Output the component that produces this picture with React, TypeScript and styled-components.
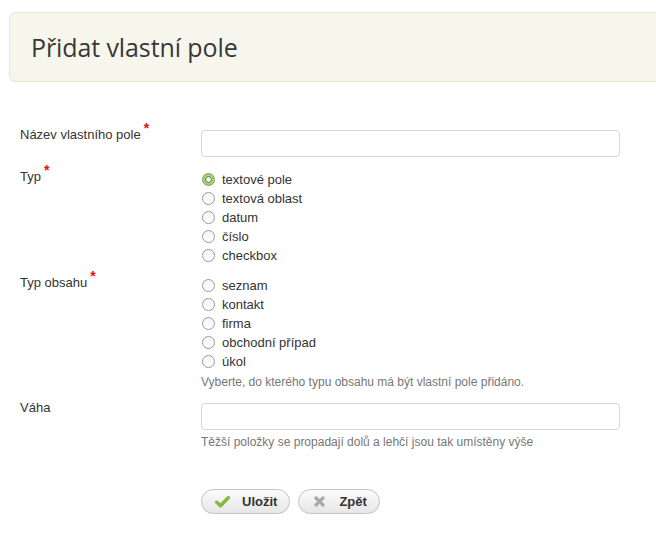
import React from "react";
import styled, { createGlobalStyle } from "styled-components";

const Global = createGlobalStyle`
  html, body { margin: 0; padding: 0; background: #fff; overflow: hidden; }
  body { font-family: "Liberation Sans", Arial, sans-serif; color: #333; }
`;

const Page = styled.div`
  padding-top: 12px;
  width: 656px;
  overflow: hidden;
`;

const Header = styled.div`
  margin-left: 9px;
  width: 680px;
  height: 70px;
  box-sizing: border-box;
  background: #f6f6ec;
  border: 1px solid #e4eac6;
  border-radius: 6px;
  display: flex;
  align-items: center;
  padding-left: 21px;
`;

const Title = styled.h1`
  margin: 0;
  font-family: "Open Sans", "DejaVu Sans", sans-serif;
  font-weight: 400;
  font-size: 25px;
  color: #383838;
  letter-spacing: -0.1px;
`;

const Form = styled.form`
  padding: 44px 0 0 20px;
`;

const Row = styled.div<{ $gap: number }>`
  display: grid;
  grid-template-columns: 181px 419px;
  align-items: start;
  margin-top: ${(p) => p.$gap}px;
`;

const Label = styled.label`
  font-size: 13px;
  line-height: 18px;
  color: #333;
`;

const Req = styled.sup`
  color: #e01010;
  font-weight: bold;
  font-size: 14px;
  line-height: 0;
  margin-left: 3px;
  position: relative;
  top: -1px;
`;

const Field = styled.div<{ $pad: number }>`
  padding-top: ${(p) => p.$pad}px;
`;

const Input = styled.input`
  display: block;
  width: 419px;
  height: 27px;
  box-sizing: border-box;
  border: 1px solid #d6d6d6;
  border-radius: 4px;
  background: #fff;
  font: 13px "Liberation Sans", Arial, sans-serif;
  padding: 0 6px;
  outline: none;
`;

const RadioList = styled.div`
  display: flex;
  flex-direction: column;
`;

const RadioRow = styled.div`
  display: flex;
  align-items: center;
  height: 19px;
  font-size: 13px;
  line-height: 19px;
  color: #333;
  gap: 7px;
`;

const Radio = styled.span<{ $checked?: boolean }>`
  width: 13px;
  height: 13px;
  box-sizing: border-box;
  border-radius: 50%;
  margin-left: 1px;
  flex: none;
  border: 1px solid ${(p) => (p.$checked ? "#7e9a66" : "#9a9a9a")};
  background: ${(p) =>
    p.$checked
      ? "radial-gradient(circle, #fff 0 2px, #5f8f35 2.5px 3px, #a6d373 3.5px)"
      : "linear-gradient(#f4f4f4, #ffffff)"};
`;

const Help = styled.div<{ $top: number }>`
  font-size: 12px;
  line-height: 16px;
  color: #777;
  margin-top: ${(p) => p.$top}px;
`;

const Actions = styled.div`
  display: flex;
  gap: 8px;
  margin-top: 39px;
  padding-left: 181px;
`;

const Button = styled.button`
  display: flex;
  align-items: center;
  gap: 12px;
  height: 25px;
  box-sizing: border-box;
  padding: 0 12px 0 12px;
  border: 1px solid #c4c4c4;
  border-radius: 13px;
  background: linear-gradient(#fbfbfb, #e6e6e6);
  font: bold 13px "Liberation Sans", Arial, sans-serif;
  color: #333;
  box-shadow: 0 1px 0 rgba(0, 0, 0, 0.05);
`;

const IconBox = styled.span`
  width: 16px;
  height: 16px;
  display: flex;
  align-items: center;
  justify-content: center;
`;

const CheckIcon = () => (
  <svg width="15" height="12" viewBox="0 0 15 12">
    <path d="M1.8 6.3 L5.5 9.8 L13.3 1.8" fill="none" stroke="#8ab83a" strokeWidth="3.6" strokeLinecap="round" strokeLinejoin="round" />
  </svg>
);

const XIcon = () => (
  <svg width="11" height="11" viewBox="0 0 11 11">
    <path d="M2 2 L9 9 M9 2 L2 9" fill="none" stroke="#aaaaaa" strokeWidth="3.2" strokeLinecap="round" />
  </svg>
);

const typy = ["textové pole", "textová oblast", "datum", "číslo", "checkbox"];
const obsahy = ["seznam", "kontakt", "firma", "obchodní případ", "úkol"];

export default function App() {
  return (
    <Page>
      <Global />
      <Header>
        <Title>Přidat vlastní pole</Title>
      </Header>
      <Form onSubmit={(e) => e.preventDefault()}>
        <Row $gap={0}>
          <Label>
            Název vlastního pole<Req>*</Req>
          </Label>
          <Field $pad={4}>
            <Input type="text" />
          </Field>
        </Row>
        <Row $gap={11}>
          <Label>
            Typ<Req>*</Req>
          </Label>
          <Field $pad={2}>
            <RadioList>
              {typy.map((t, i) => (
                <RadioRow key={t}>
                  <Radio $checked={i === 0} />
                  {t}
                </RadioRow>
              ))}
            </RadioList>
          </Field>
        </Row>
        <Row $gap={9}>
          <Label>
            Typ obsahu<Req>*</Req>
          </Label>
          <Field $pad={2}>
            <RadioList>
              {obsahy.map((t) => (
                <RadioRow key={t}>
                  <Radio />
                  {t}
                </RadioRow>
              ))}
            </RadioList>
            <Help $top={3}>Vyberte, do kterého typu obsahu má být vlastní pole přidáno.</Help>
          </Field>
        </Row>
        <Row $gap={9}>
          <Label>Váha</Label>
          <Field $pad={4}>
            <Input type="text" />
            <Help $top={4}>Těžší položky se propadají dolů a lehčí jsou tak umístěny výše</Help>
          </Field>
        </Row>
        <Actions>
          <Button type="button">
            <IconBox>
              <CheckIcon />
            </IconBox>
            Uložit
          </Button>
          <Button type="button">
            <IconBox>
              <XIcon />
            </IconBox>
            Zpět
          </Button>
        </Actions>
      </Form>
    </Page>
  );
}
